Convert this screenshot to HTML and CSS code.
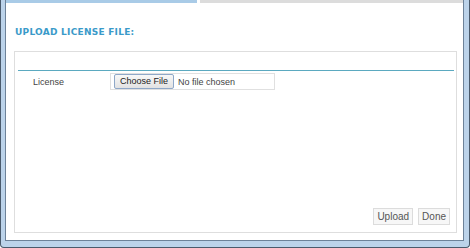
FILE: index.html
```html
<!DOCTYPE html>
<html lang="en">
<head>
  <meta charset="UTF-8">
  <title>Upload License</title>
  <link rel="stylesheet" href="styles.css">
</head>
<body>
  <div class="window">
    <div class="dialog">
      <!-- tabs -->
      <div class="tabs">
        <div class="tab active"></div>
        <div class="tab"></div>
      </div>

      <h2 class="title">UPLOAD LICENSE FILE:</h2>

      <div class="panel">
        <div class="panel-head"></div>
        <div class="row">
          <label class="label">License</label>
          <div class="file-input">
            <span class="file-btn">Choose File</span>
            <span class="file-name">No file chosen</span>
          </div>
        </div>
        <div class="actions">
          <button>Upload</button>
          <button>Done</button>
        </div>
      </div>
    </div>
  </div>
</body>
</html>
```

FILE: styles.css
```css
body {
  margin: 0;
  padding: 0;
  width: 470px;
  height: 248px;
  overflow: hidden;
  font-family: 'Liberation Sans', Arial, sans-serif;
  background: #fff;
}

.window {
  box-sizing: border-box;
  width: 470px;
  height: 248px;
  background: #bcd3ea;
  border: 1px solid #4a5a6c;
  border-top: none;
  padding: 0 5px 6px 4px;
  border-radius: 0 0 4px 4px;
}

.dialog {
  box-sizing: border-box;
  height: 100%;
  background: #fff;
  border: 1px solid #6d8299;
  border-top: none;
  display: flex;
  flex-direction: column;
}

.tabs {
  display: flex;
  gap: 3px;
  height: 3px;
}

.tab {
  flex: 1;
  background: #dcdcdc;
}

.tab.active {
  flex: 0 0 191px;
  background: #a9cbe7;
}

.title {
  margin: 24px 0 0 9px;
  font-family: 'DejaVu Sans', Verdana, sans-serif;
  font-size: 9px;
  font-weight: bold;
  color: #3a9ac9;
  letter-spacing: 0.25px;
}

.panel {
  margin: 14px 6px 7px 8px;
  flex: 1;
  border: 1px solid #dedede;
  padding: 0 2px 7px 3px;
  display: flex;
  flex-direction: column;
}

.panel-head {
  height: 18px;
  border-bottom: 1px solid #5ba9c0;
}

.row {
  display: flex;
  align-items: center;
  margin-top: 2px;
  height: 17px;
}

.label {
  width: 77px;
  padding-left: 15px;
  font-size: 9px;
  color: #444;
}

.file-input {
  box-sizing: border-box;
  display: flex;
  align-items: center;
  width: 165px;
  height: 17px;
  padding-left: 3px;
  border: 1px solid #e0e0e0;
  font-size: 9px;
}

.file-btn {
  box-sizing: border-box;
  height: 15px;
  line-height: 13px;
  padding: 0 5px;
  background: linear-gradient(#f8f8f8, #e2e2e2);
  border: 1px solid #8fa8c8;
  border-radius: 2px;
  color: #222;
}

.file-name {
  padding-left: 4px;
  color: #444;
}

.actions {
  margin-top: auto;
  display: flex;
  justify-content: flex-end;
  gap: 5px;
  padding-right: 4px;
}

button {
  font-family: 'Liberation Sans', Arial, sans-serif;
  font-size: 10px;
  color: #555;
  background: #f7f7f7;
  border: 1px solid #dcdcdc;
  padding: 0 3px;
  height: 17px;
  cursor: pointer;
}
```
